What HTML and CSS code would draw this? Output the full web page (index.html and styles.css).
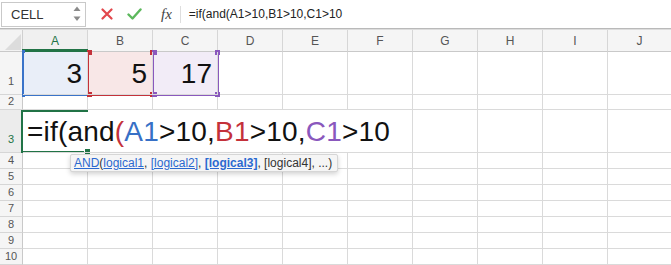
FILE: index.html
```html
<!DOCTYPE html>
<html>
<head>
<meta charset="utf-8">
<link rel="stylesheet" href="styles.css">
</head>
<body>
<div class="app">
  <div class="toolbar">
    <div class="namebox">
      <span class="name">CELL</span>
      <span class="spin">
        <svg width="8" height="16" viewBox="0 0 8 16"><path d="M0.5 5 L4 0.5 L7.5 5 Z" fill="#8a8a8a"/><path d="M0.5 10.5 L4 15 L7.5 10.5 Z" fill="#8a8a8a"/></svg>
      </span>
    </div>
    <div class="actions">
      <svg class="ico" width="12" height="12" viewBox="0 0 12 12"><path d="M1.5 1.5 L10.5 10.5 M10.5 1.5 L1.5 10.5" stroke="#e2474c" stroke-width="2.2" stroke-linecap="round"/></svg>
      <svg class="ico" width="15" height="12" viewBox="0 0 15 12"><path d="M1.5 6.5 L5.5 10.5 L13.5 1.5" stroke="#5cb85c" stroke-width="2.4" fill="none" stroke-linecap="round" stroke-linejoin="round"/></svg>
      <span class="fx">fx</span>
    </div>
    <div class="formula">=if(and(A1&gt;10,B1&gt;10,C1&gt;10</div>
  </div>
  <div class="sheet">
    <div class="grid">
      <div class="corner"><svg width="18" height="18" viewBox="0 0 18 18"><path d="M18 2 L18 18 L2 18 Z" fill="#dcdcdc"/></svg></div>
      <div class="ch sel">A</div><div class="ch">B</div><div class="ch">C</div><div class="ch">D</div><div class="ch">E</div><div class="ch">F</div><div class="ch">G</div><div class="ch">H</div><div class="ch">I</div><div class="ch last">J</div>

      <div class="rh">1</div>
      <div class="c num">3</div><div class="c num">5</div><div class="c num">17</div><div class="c"></div><div class="c"></div><div class="c"></div><div class="c"></div><div class="c"></div><div class="c"></div><div class="c last"></div>

      <div class="rh">2</div>
      <div class="c"></div><div class="c"></div><div class="c"></div><div class="c"></div><div class="c"></div><div class="c"></div><div class="c"></div><div class="c"></div><div class="c"></div><div class="c last"></div>

      <div class="rh sel">3</div>
      <div class="c edit"><span>=if(and<span class="red">(</span><span class="blue">A1</span>&gt;10,<span class="red">B1</span>&gt;10,<span class="purple">C1</span>&gt;10</span></div><div class="c"></div><div class="c"></div><div class="c"></div><div class="c last"></div>

      <div class="rh">4</div>
      <div class="c"></div><div class="c"></div><div class="c"></div><div class="c"></div><div class="c"></div><div class="c"></div><div class="c"></div><div class="c"></div><div class="c"></div><div class="c last"></div>
      <div class="rh">5</div>
      <div class="c"></div><div class="c"></div><div class="c"></div><div class="c"></div><div class="c"></div><div class="c"></div><div class="c"></div><div class="c"></div><div class="c"></div><div class="c last"></div>
      <div class="rh">6</div>
      <div class="c"></div><div class="c"></div><div class="c"></div><div class="c"></div><div class="c"></div><div class="c"></div><div class="c"></div><div class="c"></div><div class="c"></div><div class="c last"></div>
      <div class="rh">7</div>
      <div class="c"></div><div class="c"></div><div class="c"></div><div class="c"></div><div class="c"></div><div class="c"></div><div class="c"></div><div class="c"></div><div class="c"></div><div class="c last"></div>
      <div class="rh">8</div>
      <div class="c"></div><div class="c"></div><div class="c"></div><div class="c"></div><div class="c"></div><div class="c"></div><div class="c"></div><div class="c"></div><div class="c"></div><div class="c last"></div>
      <div class="rh">9</div>
      <div class="c"></div><div class="c"></div><div class="c"></div><div class="c"></div><div class="c"></div><div class="c"></div><div class="c"></div><div class="c"></div><div class="c"></div><div class="c last"></div>
      <div class="rh">10</div>
      <div class="c"></div><div class="c"></div><div class="c"></div><div class="c"></div><div class="c"></div><div class="c"></div><div class="c"></div><div class="c"></div><div class="c"></div><div class="c last"></div>
    </div>

    <div class="colbar"></div>
    <div class="range r-blue"><i class="k tl"></i><i class="k tr"></i><i class="k bl"></i><i class="k br"></i></div>
    <div class="range r-red"><i class="k tl"></i><i class="k tr"></i><i class="k bl"></i><i class="k br"></i></div>
    <div class="range r-purple"><i class="k tl"></i><i class="k tr"></i><i class="k bl"></i><i class="k br"></i></div>
    <div class="active"><i class="handle"></i></div>

    <div class="tip"><a>AND</a>(<a>logical1</a>, <a>[logical2]</a>, <a class="b">[logical3]</a>, [logical4], ...)</div>
  </div>
</div>
</body>
</html>
```

FILE: styles.css
```css
* { box-sizing: border-box; }
html, body { margin: 0; padding: 0; background: #fff; }
body { width: 671px; height: 265px; overflow: hidden; font-family: "Liberation Sans", Arial, sans-serif; }

.toolbar {
  height: 29px;
  display: flex;
  align-items: center;
  border-bottom: 1px solid #b9b9b9;
  background: #fff;
}
.namebox {
  width: 85px;
  height: 25px;
  margin-left: 1px;
  border: 1px solid #c9c9c9;
  display: flex;
  align-items: center;
  justify-content: space-between;
  padding: 0 4px 0 9px;
}
.name { font-size: 13px; color: #333; }
.spin { display: flex; align-items: center; }
.actions {
  display: flex;
  align-items: center;
  padding-left: 15px;
  gap: 14px;
  height: 100%;
}
.fx {
  font-family: "Liberation Serif", "Times New Roman", serif;
  font-style: italic;
  font-size: 15px;
  color: #444;
  margin-left: 5px;
  padding-right: 8px;
  border-right: 1px solid #dedede;
  line-height: 17px;
}
.formula {
  padding-left: 8px;
  font-size: 12px;
  color: #222;
}

.sheet { position: relative; border-top: 1px solid #dcdcdc; }
.grid {
  display: grid;
  grid-template-columns: 23px repeat(9, 65px) 1fr;
  grid-template-rows: 22px 43px 15px 43px repeat(7, 16px);
}
.corner {
  background: #f3f3f3;
  border-right: 1px solid #d0d0d0;
  border-bottom: 1px solid #c9c9c9;
  display: flex;
  align-items: flex-end;
  justify-content: flex-end;
  padding: 0 1px 1px 0;
}
.ch {
  background: #f5f5f5;
  border-right: 1px solid #d6d6d6;
  border-bottom: 1px solid #c9c9c9;
  font-size: 12px;
  color: #555;
  display: flex;
  align-items: center;
  justify-content: center;
}
.ch.sel { color: #217346; background: #f0f0f0; }
.ch.last { border-right: none; }
.rh {
  background: #f5f5f5;
  border-right: 1px solid #c9c9c9;
  border-bottom: 1px solid #d6d6d6;
  font-size: 11px;
  color: #555;
  display: flex;
  align-items: flex-end;
  justify-content: center;
  padding-bottom: 1px;
  line-height: 13px;
}
.rh.sel { color: #217346; background: #ececec; padding-bottom: 6px; }
.grid > .rh:nth-child(12) { padding-bottom: 6px; }
.c {
  border-right: 1px solid #dadada;
  border-bottom: 1px solid #dadada;
}
.c.last { border-right: none; }
.num, .edit {
  font-size: 28px;
  line-height: 32px;
  color: #111;
  display: flex;
  align-items: flex-end;
  padding-bottom: 4px;
}
.num { justify-content: flex-end; padding-right: 5px; position: relative; z-index: 2; }
.edit {
  grid-column: span 6;
  padding-left: 4px;
  white-space: nowrap;
  position: relative;
  z-index: 4;
  letter-spacing: 0.2px;
}
.red { color: #c4313a; }
.blue { color: #3770c6; }
.purple { color: #8a58bd; }

.colbar {
  position: absolute;
  left: 22px; top: 19px;
  width: 66px; height: 3px;
  background: #217346;
}
.range {
  position: absolute;
  top: 22px;
  height: 44px;
  width: 67px;
  border: 2px solid;
  border-top: none;
}
.r-blue { left: 22px; border-color: #3a73c9; background: #e9eef8; }
.r-red { left: 87px; border-color: #c4313a; background: #f8e7e7; }
.r-purple { left: 152px; border-color: #8a58bd; background: #f2ecf7; }
.k { position: absolute; width: 5px; height: 5px; }
.r-blue .k { background: #3a73c9; width: 3px; height: 3px; }
.r-red .k { background: #c4313a; }
.r-purple .k { background: #8a58bd; }
.k.tl { left: -2px; top: -2px; }
.k.tr { right: -3px; top: -2px; }
.k.bl { left: -2px; bottom: -3px; }
.k.br { right: -3px; bottom: -3px; }
.active {
  position: absolute;
  left: 21px; top: 80px;
  width: 67px; height: 43px;
  border: 2px solid #217346;
  border-right: none;
  z-index: 3;
}
.handle {
  position: absolute;
  right: -3px; bottom: -4px;
  width: 5px; height: 5px;
  background: #217346;
  border: 1px solid #fff;
  box-sizing: content-box;
}
.tip {
  position: absolute;
  left: 70px; top: 124px;
  height: 18px;
  padding: 0 5px 0 3px;
  background: #f5f5f5;
  border: 1px solid #d6d6d6;
  border-radius: 2px;
  box-shadow: 0 2px 5px rgba(0,0,0,0.18);
  font-size: 12px;
  line-height: 16px;
  color: #333;
  white-space: nowrap;
  z-index: 5;
}
.tip a { color: #2b69d0; text-decoration: underline; }
.tip a.b { font-weight: bold; }
```
